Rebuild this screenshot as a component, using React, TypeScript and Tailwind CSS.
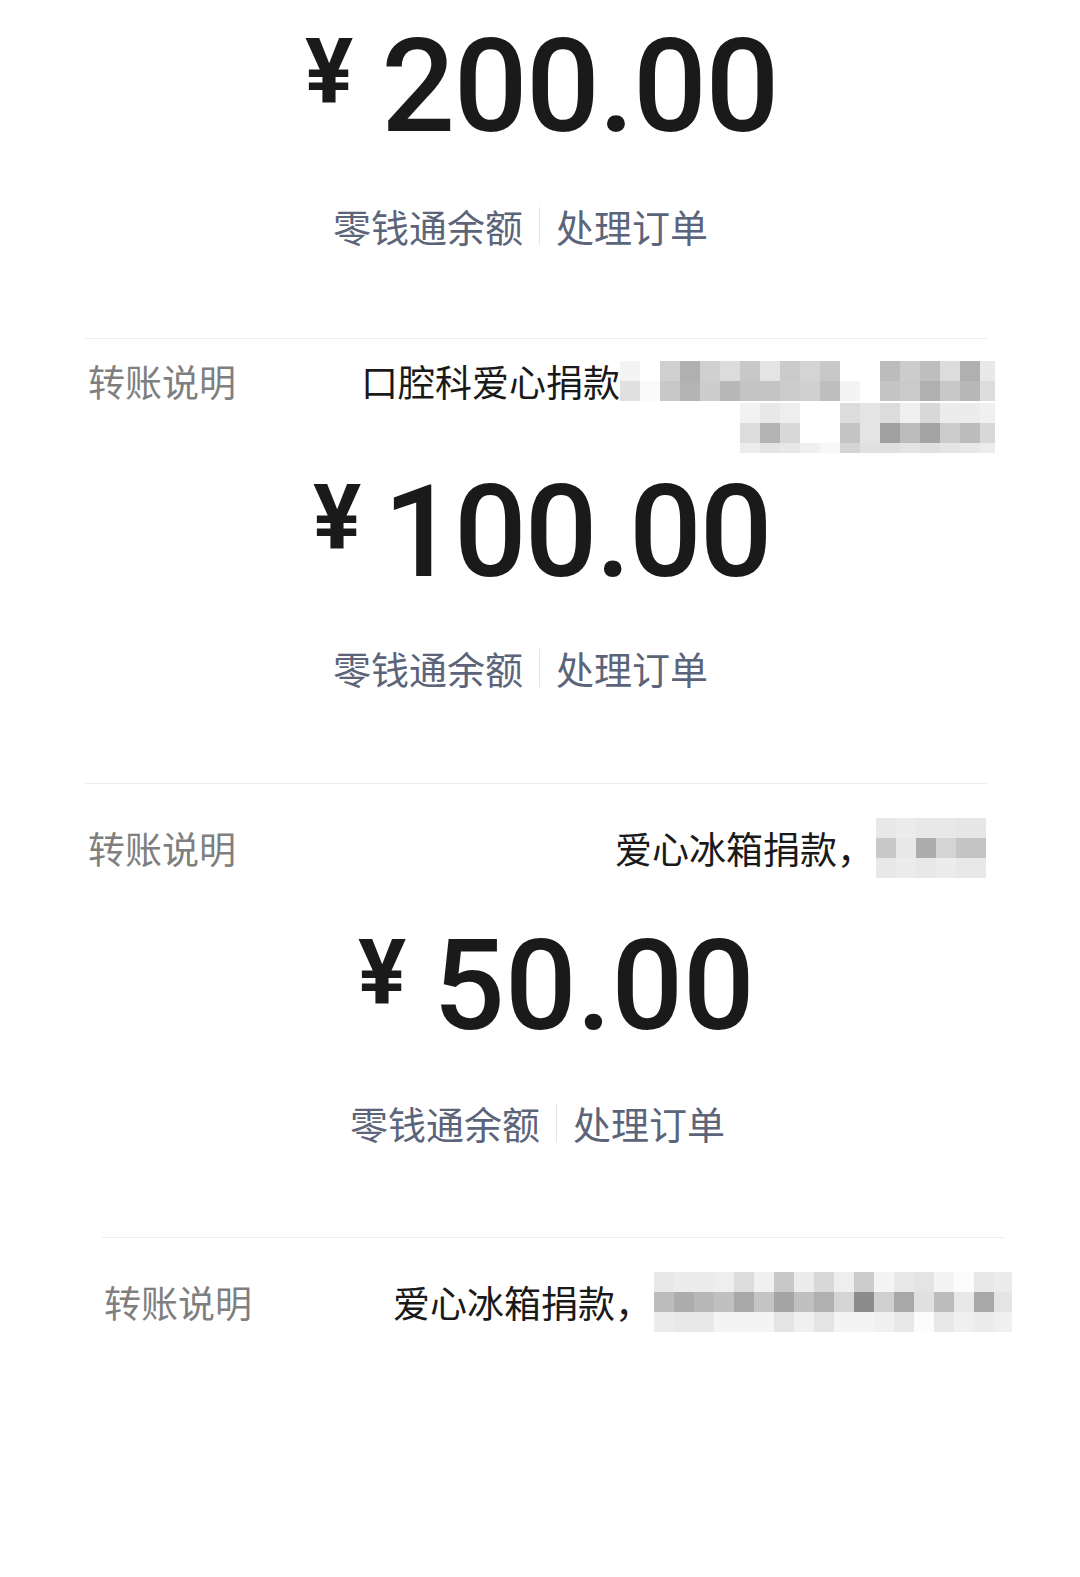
import React from "react";

type Cells = string[];

const b1r1: Cells[] = [
  ["#f4f4f4","#ffffff","#d0d0d0","#b0b0b0","#d0d0d0","#dcdcdc","#c8c8c8","#e4e4e4","#cacaca","#d4d4d4","#c8c8c8","#ffffff","#ffffff","#bcbcbc","#cccccc","#bebebe","#dcdcdc","#b0b0b0","#e8e8e8"],
  ["#e0e0e0","#fafafa","#c8c8c8","#b4b4b4","#cdcdcd","#b8b8b8","#c4c4c4","#c4c4c4","#cccccc","#d0d0d0","#bebebe","#f4f4f4","#ffffff","#c4c4c4","#cacaca","#b0b0b0","#c8c8c8","#b8b8b8","#dcdcdc"],
];
const b1r2: Cells[] = [
  ["#f2f2f2","#e8e8e8","#eeeeee","#ffffff","#ffffff","#dcdcdc","#e4e4e4","#dcdcdc","#f0f0f0","#d8d8d8","#ececec","#ececec","#f0f0f0"],
  ["#dcdcdc","#b4b4b4","#d8d8d8","#ffffff","#ffffff","#c4c4c4","#e4e4e4","#a0a0a0","#bcbcbc","#a4a4a4","#cccccc","#bcbcbc","#d8d8d8"],
];
const b1r2e: Cells = ["#ececec","#e4e4e4","#e8e8e8","#f0f0f0","#f8f8f8","#d4d4d4","#e0e0e0","#e0e0e0","#e4e4e4","#e0e0e0","#e4e4e4","#e8e8e8","#ececec"];

const b2: Cells[] = [
  ["#e8e8e8","#ececec","#e8e8e8","#e8e8e8","#e6e6e6"],
  ["#c8c8c8","#e8e8e8","#acacac","#d4d4d4","#c4c4c4"],
  ["#e8e8e8","#ececec","#e8e8e8","#ececec","#e8e8e8"],
];

const b3: Cells[] = [
  ["#e8e8e8","#ececec","#ececec","#eeeeee","#dcdcdc","#f0f0f0","#c8c8c8","#ececec","#d8d8d8","#eeeeee","#cccccc","#f4f4f4","#e8e8e8","#e4e4e4","#f4f4f4","#fcfcfc","#e8e8e8","#ececec"],
  ["#bcbcbc","#acacac","#b8b8b8","#c0c0c0","#a8a8a8","#c4c4c4","#a4a4a4","#c0c0c0","#b0b0b0","#d4d4d4","#8c8c8c","#d0d0d0","#a8a8a8","#e0e0e0","#bcbcbc","#e8e8e8","#a8a8a8","#e4e4e4"],
  ["#ececec","#e8e8e8","#e8e8e8","#f4f4f4","#f4f4f4","#f4f4f4","#e4e4e4","#f0f0f0","#e4e4e4","#f4f4f4","#f4f4f4","#f0f0f0","#e8e8e8","#fcfcfc","#e8e8e8","#f0f0f0","#ececec","#f0f0f0"],
];

function CellRow({ cells, tall = true }: { cells: Cells; tall?: boolean }) {
  return (
    <div className="flex">
      {cells.map((c, i) => (
        <div
          key={i}
          className={tall ? "h-[20px] w-[20px] shrink-0" : "h-[10px] w-[20px] shrink-0"}
          style={{ backgroundColor: c }}
        />
      ))}
    </div>
  );
}

function Amount({
  value,
  className,
  yenClass,
  numClass,
}: {
  value: string;
  className: string;
  yenClass: string;
  numClass: string;
}) {
  return (
    <div className={`flex items-start text-[#1a1a1a] font-['Roboto',sans-serif] ${className}`}>
      <span className={`mt-[6px] text-[90px] font-bold leading-none ${yenClass}`}>¥</span>
      <span className={`font-medium leading-none ${numClass}`}>{value}</span>
    </div>
  );
}

function Links({ className }: { className: string }) {
  return (
    <div className={`flex items-center text-[38px] leading-[44px] text-[#5b6479] ${className}`}>
      <span>零钱通余额</span>
      <span className="mx-[16px] h-[38px] w-px bg-[#e6e6e6]" />
      <span>处理订单</span>
    </div>
  );
}

export default function App() {
  return (
    <div className="min-h-[1577px] w-[1080px] overflow-hidden bg-white font-['Noto_Sans_CJK_SC','Noto_Sans',sans-serif]">
      {/* Block 1 */}
      <Amount
        value="200.00"
        className="pt-[22px] pl-[305px]"
        yenClass="mr-[28px]"
        numClass="text-[130px] tracking-[-1.5px]"
      />
      <Links className="mt-[52px] pl-[333px]" />
      <div className="mt-[90px] ml-[85px] h-px w-[902px] bg-[#ececec]" />
      <div className="mt-[20px] ml-[88px] flex w-[907px] items-start justify-between">
        <span className="text-[37px] leading-[44px] text-[#7f7f7f]">转账说明</span>
        <div className="flex flex-col items-end">
          <div className="flex h-[44px] items-center">
            <span className="text-[37px] leading-[44px] text-[#1a1a1a]">口腔科爱心捐款</span>
            <div className="w-[375px] overflow-hidden">
              {b1r1.map((r, i) => (
                <CellRow key={i} cells={r} />
              ))}
            </div>
          </div>
          <div className="w-[255px] overflow-hidden">
            {b1r2.map((r, i) => (
              <CellRow key={i} cells={r} />
            ))}
            <CellRow cells={b1r2e} tall={false} />
          </div>
        </div>
      </div>

      {/* Block 2 */}
      <Amount
        value="100.00"
        className="mt-[15px] pl-[313px]"
        yenClass="mr-[22px]"
        numClass="text-[128px] tracking-[-2px]"
      />
      <Links className="mt-[50px] pl-[333px]" />
      <div className="mt-[93px] ml-[85px] h-px w-[902px] bg-[#ececec]" />
      <div className="mt-[34px] ml-[88px] flex w-[898px] items-center justify-between">
        <span className="text-[37px] leading-[44px] text-[#7f7f7f]">转账说明</span>
        <div className="flex items-center">
          <span className="mr-[2px] text-[37px] leading-[44px] text-[#1a1a1a]">爱心冰箱捐款，</span>
          <div className="flex flex-col">
            {b2.map((r, i) => (
              <div key={i} className="flex">
                {r.map((c, j) => (
                  <div
                    key={j}
                    className={j === 4 ? "h-[20px] w-[30px]" : "h-[20px] w-[20px]"}
                    style={{ backgroundColor: c }}
                  />
                ))}
              </div>
            ))}
          </div>
        </div>
      </div>

      {/* Block 3 */}
      <Amount
        value="50.00"
        className="mt-[45px] pl-[358px]"
        yenClass="mr-[27px]"
        numClass="text-[126px]"
      />
      <Links className="mt-[52px] pl-[350px]" />
      <div className="mt-[92px] ml-[102px] h-px w-[902px] bg-[#ececec]" />
      <div className="mt-[34px] ml-[104px] flex w-[908px] items-center justify-between">
        <span className="text-[37px] leading-[44px] text-[#7f7f7f]">转账说明</span>
        <div className="flex items-center">
          <span className="mr-[2px] text-[37px] leading-[44px] text-[#1a1a1a]">爱心冰箱捐款，</span>
          <div className="w-[358px] overflow-hidden">
            {b3.map((r, i) => (
              <CellRow key={i} cells={r} />
            ))}
          </div>
        </div>
      </div>
    </div>
  );
}
